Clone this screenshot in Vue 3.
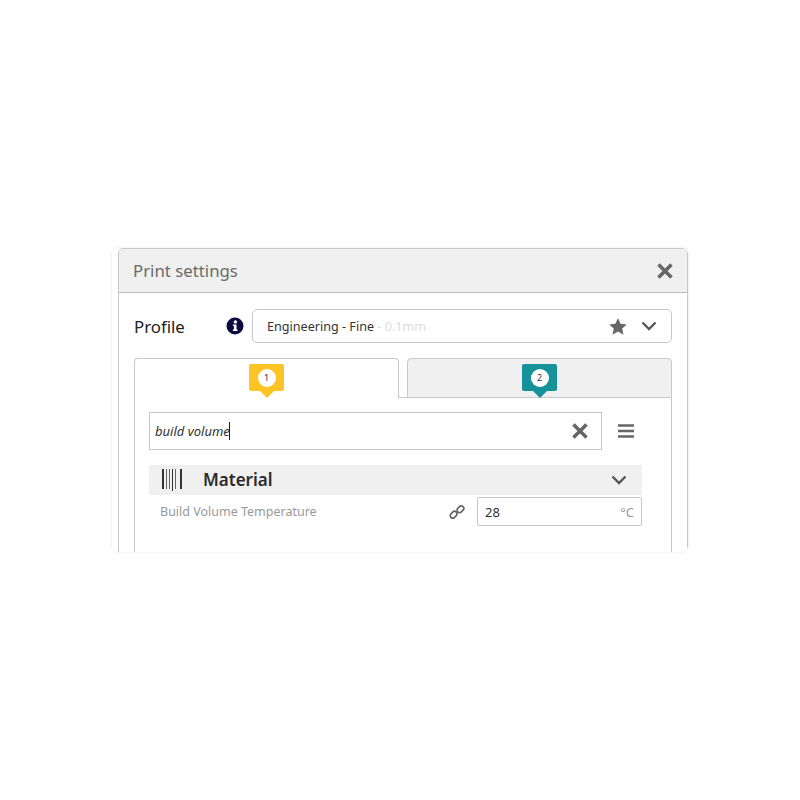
<template>
  <div class="page">
    <div class="backdrop">
      <div class="panel">
        <header class="panel-head">
          <span class="panel-title">Print settings</span>
          <svg class="icon-x" width="16" height="16" viewBox="0 0 16 16"><path d="M1.5 1.5l13 13M14.5 1.5l-13 13" /></svg>
        </header>
        <div class="panel-body">
          <div class="profile-row">
            <span class="profile-label">Profile</span>
            <svg class="info" width="18" height="18" viewBox="0 0 18 18">
              <circle cx="9" cy="9" r="8.5" fill="#0b0b3f" />
              <circle cx="9.4" cy="4.9" r="1.7" fill="#fff" />
              <path d="M6.9 7.4h3.6v5.2h1v1.5H6.9v-1.5h1v-3.7h-1z" fill="#fff" />
            </svg>
            <div class="profile-select">
              <span class="profile-name">Engineering - Fine <span class="profile-sub">- 0.1mm</span></span>
              <svg class="star" width="18" height="17" viewBox="0 0 18 17"><path d="M9 0l2.6 5.7 6.2.7-4.6 4.2 1.3 6.1L9 13.6l-5.5 3.1 1.3-6.1L.2 6.4l6.2-.7z" /></svg>
              <svg class="chev" width="16" height="10" viewBox="0 0 16 10"><path d="M1.5 1.5L8 8l6.5-6.5" /></svg>
            </div>
          </div>

          <div class="tabs">
            <div class="tab tab-active">
              <div class="marker marker-yellow"><span class="marker-num">1</span></div>
            </div>
            <div class="tab-gap"></div>
            <div class="tab">
              <div class="marker marker-teal"><span class="marker-num">2</span></div>
            </div>
          </div>

          <div class="tab-content">
            <div class="search-row">
              <div class="search-box">
                <span class="search-text">build volume</span>
                <span class="caret"></span>
                <svg class="icon-x search-x" width="16" height="16" viewBox="0 0 16 16"><path d="M1.5 1.5l13 13M14.5 1.5l-13 13" /></svg>
              </div>
              <svg class="menu" width="16" height="14" viewBox="0 0 16 14"><path d="M0 1.5h16M0 7h16M0 12.5h16" /></svg>
            </div>

            <div class="category">
              <svg class="barcode" width="20" height="22" viewBox="0 0 20 22">
                <rect x="0" y="0" width="2" height="20" />
                <rect class="thin" x="4" y="0" width="1" height="20" />
                <rect class="thin" x="7" y="0" width="1" height="20" />
                <rect x="10" y="0" width="1" height="22" />
                <rect class="thin" x="13" y="0" width="1" height="20" />
                <rect x="18" y="0" width="2" height="20" />
              </svg>
              <span class="category-name">Material</span>
              <svg class="chev" width="16" height="10" viewBox="0 0 16 10"><path d="M1.5 1.5L8 8l6.5-6.5" /></svg>
            </div>

            <div class="setting">
              <span class="setting-name">Build Volume Temperature</span>
              <svg class="link" width="16" height="16" viewBox="0 0 16 16">
                <rect x="0.9" y="8.2" width="7.4" height="5" rx="2.5" transform="rotate(-45 4.6 10.7)" />
                <rect x="7.7" y="2.8" width="7.4" height="5" rx="2.5" transform="rotate(-45 11.4 5.3)" />
              </svg>
              <div class="setting-input">
                <span>28</span>
                <span class="unit">°C</span>
              </div>
            </div>
          </div>
        </div>
      </div>
    </div>
  </div>
</template>

<script setup>
</script>

<style>
body {
  margin: 0;
  background: #fff;
}
</style>

<style scoped>
.page {
  width: 800px;
  height: 800px;
  padding-top: 248px;
  padding-left: 112px;
  box-sizing: border-box;
  font-family: "Noto Sans", sans-serif;
}

.backdrop {
  width: 576px;
  height: 304px;
  padding-left: 6px;
  box-sizing: border-box;
  border-radius: 6px;
  background: #fff;
  box-shadow: 0 0 3px rgba(0, 0, 0, 0.1);
  overflow: hidden;
}

.panel {
  height: 100%;
  box-sizing: border-box;
  border: 1px solid #c8c8c8;
  border-bottom: none;
  border-radius: 5px 5px 0 0;
  overflow: hidden;
}

.panel-head {
  height: 44px;
  box-sizing: border-box;
  display: flex;
  align-items: center;
  justify-content: space-between;
  padding: 0 14px 0 14px;
  background: #f0f0f0;
  border-bottom: 1px solid #bdbdbd;
}

.panel-title {
  font-size: 16.8px;
  color: #6b6b6b;
}

.icon-x path {
  fill: none;
  stroke: #666;
  stroke-width: 3.6;
}

.panel-body {
  padding: 16px 15px 0 15px;
}

.profile-row {
  display: flex;
  align-items: center;
  height: 34px;
}

.profile-label {
  width: 92px;
  font-size: 16.8px;
  color: #222;
}

.info {
  margin-right: 8px;
}

.profile-select {
  flex: 1;
  height: 34px;
  box-sizing: border-box;
  display: flex;
  align-items: center;
  padding: 0 14px 0 14px;
  border: 1px solid #c8c8c8;
  border-radius: 5px;
  font-size: 12.6px;
  color: #333;
}

.profile-name {
  flex: 1;
}

.profile-sub {
  color: #dcdcdc;
}

.star {
  margin-right: 14px;
  fill: #666;
}

.chev path {
  fill: none;
  stroke: #555;
  stroke-width: 2.3;
}

.tabs {
  display: flex;
  margin-top: 15px;
  height: 40px;
}

.tab {
  flex: 1;
  box-sizing: border-box;
  display: flex;
  justify-content: center;
  padding-top: 5px;
  background: #f0f0f0;
  border: 1px solid #c8c8c8;
  border-radius: 4px 4px 0 0;
  position: relative;
}

.tab-active {
  flex: none;
  width: 265px;
  background: #fff;
  border-bottom: none;
  z-index: 1;
}

.tab-gap {
  width: 8px;
  border-bottom: 1px solid #c8c8c8;
}

.marker {
  width: 35px;
  height: 27px;
  border-radius: 2px;
  display: flex;
  align-items: center;
  justify-content: center;
  position: relative;
  z-index: 2;
}

.marker::after {
  content: "";
  position: absolute;
  left: 50%;
  bottom: -7px;
  margin-left: -7px;
  border-left: 7px solid transparent;
  border-right: 7px solid transparent;
  border-top: 7px solid currentColor;
}

.marker-yellow {
  background: #fdc425;
  color: #fdc425;
}

.marker-teal {
  background: #16939a;
  color: #16939a;
}

.marker-num {
  width: 18px;
  height: 18px;
  border-radius: 50%;
  background: #fff;
  color: #333;
  font-size: 9px;
  line-height: 18px;
  text-align: center;
}

.tab-content {
  height: 200px;
  box-sizing: border-box;
  padding: 14px 29px 0 14px;
  border-left: 1px solid #c8c8c8;
  border-right: 1px solid #c8c8c8;
}

.search-row {
  display: flex;
  align-items: center;
  height: 38px;
}

.search-box {
  width: 453px;
  height: 38px;
  box-sizing: border-box;
  display: flex;
  align-items: center;
  padding: 0 13px 0 5px;
  border: 1px solid #c8c8c8;
  font-size: 13px;
  font-style: italic;
  color: #333;
}

.caret {
  width: 1px;
  height: 18px;
  margin-left: -1px;
  background: #1a1a3a;
}

.search-x {
  margin-left: auto;
}

.menu {
  margin-left: 16px;
}

.menu path {
  stroke: #666;
  stroke-width: 2.6;
}

.category {
  display: flex;
  align-items: center;
  height: 30px;
  margin-top: 15px;
  padding: 0 15px 0 13px;
  background: #f0f0f0;
}

.barcode {
  fill: #333;
  flex: none;
}

.barcode .thin {
  fill: #666;
}

.category-name {
  flex: 1;
  margin-left: 21px;
  padding-bottom: 2px;
  font-size: 17px;
  font-weight: 600;
  color: #2b2b2b;
}

.setting {
  display: flex;
  align-items: center;
  height: 29px;
  margin-top: 2px;
  padding-left: 11px;
}

.setting-name {
  flex: 1;
  font-size: 12.5px;
  color: #999;
}

.link {
  margin-right: 12px;
}

.link rect {
  fill: none;
  stroke: #666;
  stroke-width: 1.7;
}

.setting-input {
  width: 165px;
  height: 29px;
  box-sizing: border-box;
  display: flex;
  align-items: center;
  justify-content: space-between;
  padding: 0 7px;
  border: 1px solid #c8c8c8;
  border-radius: 2px;
  font-size: 13px;
  color: #333;
}

.unit {
  color: #999;
}
</style>
